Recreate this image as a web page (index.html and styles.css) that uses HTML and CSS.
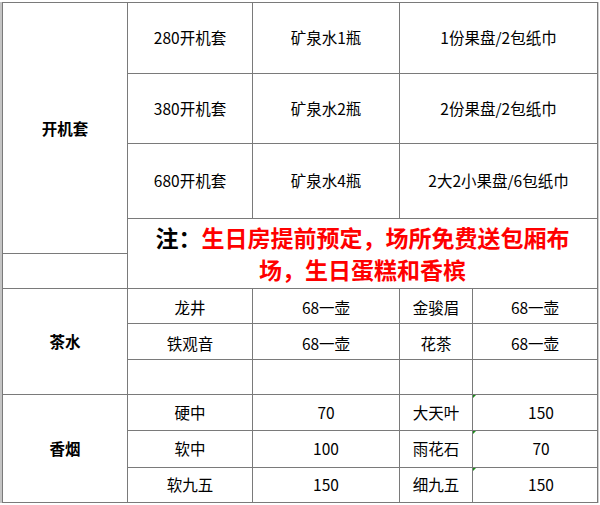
FILE: index.html
```html
<!DOCTYPE html>
<html lang="zh-CN">
<head>
<meta charset="utf-8">
<title>价目表</title>
<link rel="stylesheet" href="styles.css">
</head>
<body>
<div class="sheet">
  <div class="cell head r1-4">开机套</div>
  <div class="cell">280开机套</div>
  <div class="cell">矿泉水1瓶</div>
  <div class="cell span2">1份果盘/2包纸巾</div>

  <div class="cell">380开机套</div>
  <div class="cell">矿泉水2瓶</div>
  <div class="cell span2">2份果盘/2包纸巾</div>

  <div class="cell">680开机套</div>
  <div class="cell">矿泉水4瓶</div>
  <div class="cell span2">2大2小果盘/6包纸巾</div>

  <div class="cell note"><span class="note-text"><span class="black">注：</span>生日房提前预定，场所免费送包厢布<br>场，生日蛋糕和香槟</span></div>
  <div class="cell empty-left"></div>

  <div class="cell head r6-8">茶水</div>
  <div class="cell low">龙井</div>
  <div class="cell low">68一壶</div>
  <div class="cell low">金骏眉</div>
  <div class="cell low">68一壶</div>

  <div class="cell low">铁观音</div>
  <div class="cell low">68一壶</div>
  <div class="cell low">花茶</div>
  <div class="cell low">68一壶</div>

  <div class="cell"></div>
  <div class="cell"></div>
  <div class="cell"></div>
  <div class="cell"></div>

  <div class="cell head r9-11">香烟</div>
  <div class="cell">硬中</div>
  <div class="cell">70</div>
  <div class="cell">大天叶</div>
  <div class="cell mark shift">150</div>

  <div class="cell">软中</div>
  <div class="cell">100</div>
  <div class="cell">雨花石</div>
  <div class="cell mark shift">70</div>

  <div class="cell">软九五</div>
  <div class="cell">150</div>
  <div class="cell">细九五</div>
  <div class="cell mark shift">150</div>
</div>
</body>
</html>
```

FILE: styles.css
```css
html, body {
  margin: 0;
  padding: 0;
  background: #ffffff;
}

body {
  width: 600px;
  height: 505px;
  overflow: hidden;
  font-family: "Noto Sans CJK SC", "Noto Sans", sans-serif;
  color: #000000;
}

.sheet {
  margin: 2px 0 0 2px;
  width: 596px;
  box-sizing: border-box;
  padding: 1px;
  background: #7a7a7a;
  display: grid;
  grid-template-columns: 124px 124px 146px 72px 124px;
  grid-template-rows: 70px 69px 74px 34px 34px 34px 35px 34px 35px 36px 34px;
  gap: 1px;
  box-shadow: -2px 0 0 #c4c4c4, 1px 0 0 #d0d0d0;
}

.cell {
  background: #ffffff;
  display: flex;
  align-items: center;
  justify-content: center;
  font-size: 15.5px;
  line-height: 20px;
  white-space: nowrap;
  position: relative;
  box-sizing: border-box;
  padding-bottom: 2px;
}

.low {
  padding-top: 2px;
  padding-bottom: 0;
}

.head {
  font-weight: bold;
  grid-column: 1;
}

.r1-4 {
  grid-row: 1 / 5;
  padding-bottom: 0;
}

.empty-left {
  grid-column: 1;
  grid-row: 5;
}

.r6-8 {
  grid-row: 6 / 9;
}

.r9-11 {
  grid-row: 9 / 12;
}

.span2 {
  grid-column: span 2;
}

.note {
  grid-column: 2 / 6;
  grid-row: 4 / 6;
}

.note-text {
  display: block;
  text-align: center;
  font-size: 23px;
  line-height: 32px;
  font-weight: bold;
  color: #ff0000;
  white-space: nowrap;
}

.black {
  color: #000000;
}

.shift {
  padding-left: 12px;
}

.mark::before {
  content: "";
  position: absolute;
  left: 0;
  top: 0;
  width: 0;
  height: 0;
  border-top: 3px solid #1a8a1a;
  border-right: 3px solid transparent;
}
```
